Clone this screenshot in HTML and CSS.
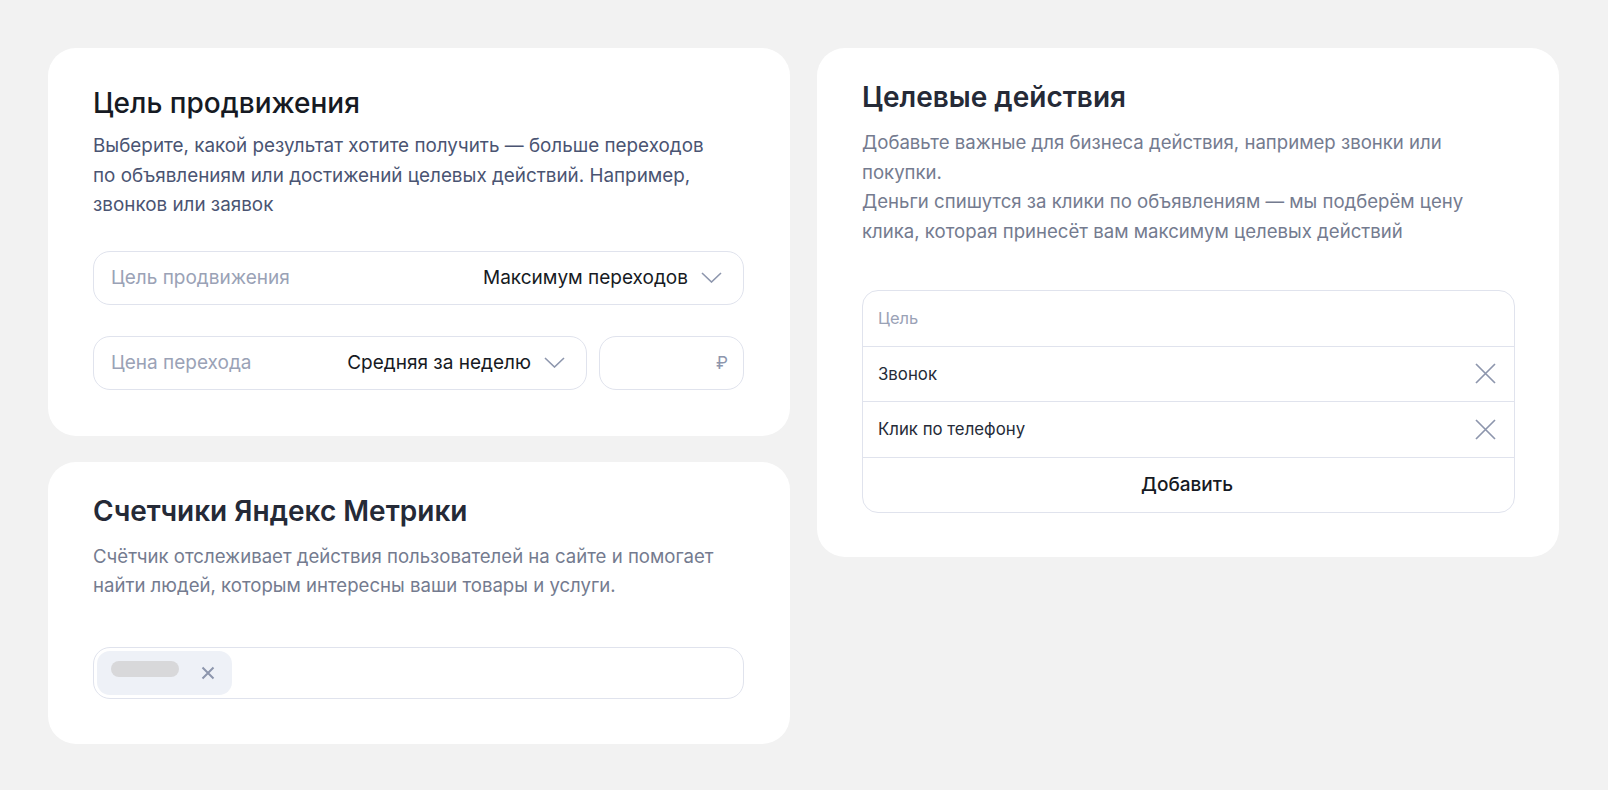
FILE: index.html
```html
<!DOCTYPE html>
<html lang="ru">
<head>
    <meta charset="UTF-8">
    <meta name="viewport" content="width=device-width, initial-scale=1.0">
    <title>Настройки кампании</title>
    <link rel="stylesheet" href="styles.css">
</head>
<body>
    <div class="layout">
        <div class="column">
            <section class="card card-goal">
                <h2 class="card-title card-title-light">Цель продвижения</h2>
                <p class="card-text card-text-dark">Выберите, какой результат хотите получить — больше переходов<br>по объявлениям или достижений целевых действий. Например,<br>звонков или заявок</p>

                <div class="field select select-goal">
                    <span class="field-label">Цель продвижения</span>
                    <span class="field-value">Максимум переходов</span>
                    <svg class="chevron" width="21" height="11" viewBox="0 0 21 11"><path d="M1 1l9.5 9 9.5-9" fill="none" stroke="currentColor" stroke-width="1.6"/></svg>
                </div>

                <div class="price-row">
                    <div class="field select select-price">
                        <span class="field-label">Цена перехода</span>
                        <span class="field-value">Средняя за неделю</span>
                        <svg class="chevron" width="21" height="11" viewBox="0 0 21 11"><path d="M1 1l9.5 9 9.5-9" fill="none" stroke="currentColor" stroke-width="1.6"/></svg>
                    </div>
                    <div class="field price-input">
                        <span class="currency">₽</span>
                    </div>
                </div>
            </section>

            <section class="card card-metrika">
                <h2 class="card-title">Счетчики Яндекс Метрики</h2>
                <p class="card-text">Счётчик отслеживает действия пользователей на сайте и помогает<br>найти людей, которым интересны ваши товары и услуги.</p>

                <div class="tags-input">
                    <div class="tag">
                        <span class="tag-skeleton"></span>
                        <svg class="tag-remove" width="14" height="14" viewBox="0 0 14 14"><path d="M1.5 1.5l11 11M12.5 1.5l-11 11" fill="none" stroke="currentColor" stroke-width="2"/></svg>
                    </div>
                </div>
            </section>
        </div>

        <div class="column">
            <section class="card card-actions">
                <h2 class="card-title">Целевые действия</h2>
                <p class="card-text">Добавьте важные для бизнеса действия, например звонки или<br>покупки.<br>Деньги спишутся за клики по объявлениям — мы подберём цену<br>клика, которая принесёт вам максимум целевых действий</p>

                <div class="goals">
                    <div class="goals-row goals-head">Цель</div>
                    <div class="goals-row">
                        <span>Звонок</span>
                        <svg class="remove" width="21" height="21" viewBox="0 0 21 21"><path d="M1 1l19 19M20 1L1 20" fill="none" stroke="currentColor" stroke-width="1.7"/></svg>
                    </div>
                    <div class="goals-row">
                        <span>Клик по телефону</span>
                        <svg class="remove" width="21" height="21" viewBox="0 0 21 21"><path d="M1 1l19 19M20 1L1 20" fill="none" stroke="currentColor" stroke-width="1.7"/></svg>
                    </div>
                    <div class="goals-row goals-add">Добавить</div>
                </div>
            </section>
        </div>
    </div>
</body>
</html>
```

FILE: styles.css
```css
:root {
    --page: #f2f2f2;
    --card: #ffffff;
    --ink: #161a23;
    --title: #252a37;
    --text-dark: #4a5472;
    --text: #747b8f;
    --hint: #9aa2b6;
    --icon: #8d96ad;
    --line: #e0e3ed;
    --chip: #eef1f7;
}

body {
    font-family: Inter, "Noto Sans", sans-serif;
    color: var(--ink);
    background-color: var(--page);
    margin: 0;
    padding: 48px;
}

.layout {
    display: flex;
    gap: 27px;
    align-items: flex-start;
}

.column {
    width: 742px;
    display: flex;
    flex-direction: column;
    gap: 26px;
}

.card {
    background-color: var(--card);
    border-radius: 28px;
    padding: 31px 46px 45px 45px;
}

.card-goal {
    padding-top: 37px;
    padding-bottom: 46px;
}

.card-actions {
    padding-right: 44px;
    padding-bottom: 44px;
}

.card-title {
    margin: 0;
    font-size: 28px;
    line-height: 36px;
    font-weight: 600;
    color: var(--title);
}

.card-title-light {
    font-weight: 500;
    color: var(--ink);
}

.card-text {
    margin: 13px 0 0;
    font-size: 18.6px;
    line-height: 29.5px;
    color: var(--text);
}

.card-text-dark {
    margin-top: 10px;
    font-size: 18.85px;
    color: var(--text-dark);
}

/* fields */

.field {
    display: flex;
    align-items: center;
    box-sizing: border-box;
    height: 54px;
    border: 1.5px solid var(--line);
    border-radius: 17px;
    padding: 0 21px 0 17px;
    font-size: 19px;
}

.select-goal {
    margin-top: 31px;
}

.field-label {
    color: var(--hint);
}

.field-value {
    margin-left: auto;
    color: var(--ink);
}

.chevron {
    margin-left: 13px;
    color: var(--icon);
}

.price-row {
    display: flex;
    gap: 12px;
    margin-top: 31px;
}

.select-price {
    flex: 1;
}

.price-input {
    width: 145px;
    justify-content: flex-end;
    padding-right: 15px;
}

.currency {
    color: var(--icon);
    font-size: 17px;
}

/* metrika counters */

.tags-input {
    margin-top: 46px;
    height: 52px;
    box-sizing: border-box;
    border: 1.5px solid var(--line);
    border-radius: 17px;
    padding: 3px;
    display: flex;
}

.tag {
    display: flex;
    align-items: center;
    gap: 22px;
    height: 100%;
    padding: 0 17px 0 14px;
    background-color: var(--chip);
    border-radius: 13px;
}

.tag-skeleton {
    width: 68px;
    height: 16px;
    border-radius: 8px;
    background-color: #d8d8da;
    margin-top: -8px;
}

.tag-remove {
    color: var(--icon);
}

/* goals table */

.goals {
    margin-top: 44px;
    border: 1.5px solid var(--line);
    border-radius: 16px;
}

.goals-row {
    display: flex;
    align-items: center;
    justify-content: space-between;
    height: 54.5px;
    padding: 0 18px 0 15px;
    font-size: 16.8px;
    color: #262b38;
    border-top: 1.5px solid var(--line);
}

.goals-head {
    border-top: none;
    font-size: 16.5px;
    color: var(--hint);
}

.goals-add {
    justify-content: center;
    font-size: 19px;
    font-weight: 500;
    color: var(--ink);
}

.remove {
    color: var(--icon);
}
```
